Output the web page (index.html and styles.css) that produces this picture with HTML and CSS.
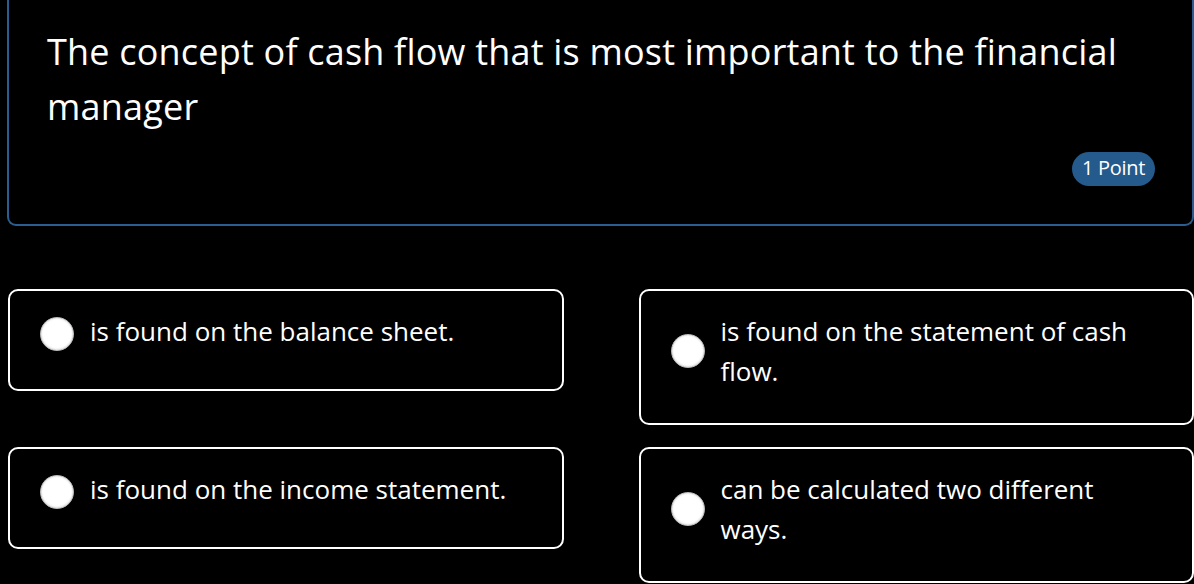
FILE: index.html
```html
<!DOCTYPE html>
<html lang="en">
<head>
<meta charset="utf-8">
<title>Question</title>
<link rel="stylesheet" href="styles.css">
</head>
<body>
<div class="page">
  <div class="question">
    <h1 class="question-title">The concept of cash flow that is most important to the financial manager</h1>
    <div class="question-meta"><span class="points">1 Point</span></div>
  </div>
  <div class="options">
    <label class="option">
      <span class="radio-wrap"><span class="radio"></span></span>
      <span class="option-text">is found on the balance sheet.</span>
    </label>
    <label class="option">
      <span class="radio-wrap"><span class="radio"></span></span>
      <span class="option-text">is found on the statement of cash flow.</span>
    </label>
    <label class="option">
      <span class="radio-wrap"><span class="radio"></span></span>
      <span class="option-text">is found on the income statement.</span>
    </label>
    <label class="option">
      <span class="radio-wrap"><span class="radio"></span></span>
      <span class="option-text">can be calculated two different ways.</span>
    </label>
  </div>
</div>
</body>
</html>
```
FILE: styles.css
```css
html, body {
  margin: 0;
  padding: 0;
  background: #000;
  color: #fff;
  font-family: "Open Sans", Lato, sans-serif;
  font-variant-ligatures: none;
}

.page {
  box-sizing: border-box;
  width: 1194px;
  padding-left: 8px;
}

.question {
  border: 2px solid #2b5d90;
  border-top: none;
  border-radius: 0 0 9px 9px;
  padding: 24px 37px 38px 38px;
  margin-left: -1px;
}

.question-title {
  margin: 0;
  font-size: 36px;
  font-weight: 400;
  line-height: 55px;
  letter-spacing: 0.2px;
}

.question-meta {
  display: flex;
  justify-content: flex-end;
  margin-top: 18px;
}

.points {
  display: inline-flex;
  align-items: center;
  height: 34px;
  padding: 0 10px 2px;
  box-sizing: border-box;
  border-radius: 17px;
  background: #245a8c;
  font-size: 20px;
  line-height: 1;
  letter-spacing: -0.3px;
}

.options {
  display: grid;
  grid-template-columns: 1fr 1fr;
  column-gap: 75px;
  row-gap: 22px;
  align-items: start;
  margin-top: 63px;
}

.option {
  display: flex;
  align-items: center;
  gap: 16px;
  border: 2px solid #fff;
  border-radius: 10px;
  padding: 20px 30px 32px 30px;
}

.radio-wrap {
  flex: none;
  height: 46px;
  display: flex;
  align-items: center;
}

.radio {
  width: 34px;
  height: 34px;
  box-sizing: border-box;
  border-radius: 50%;
  background: radial-gradient(circle at 50% 45%, #ffffff 60%, #f0f0f0 85%, #d6d6d6 100%);
  border: 1px solid #bdbdbd;
  box-shadow: inset 0 0 2px rgba(0,0,0,0.25);
}

.option-text {
  align-self: flex-start;
  font-size: 26px;
  line-height: 40px;
}
```
